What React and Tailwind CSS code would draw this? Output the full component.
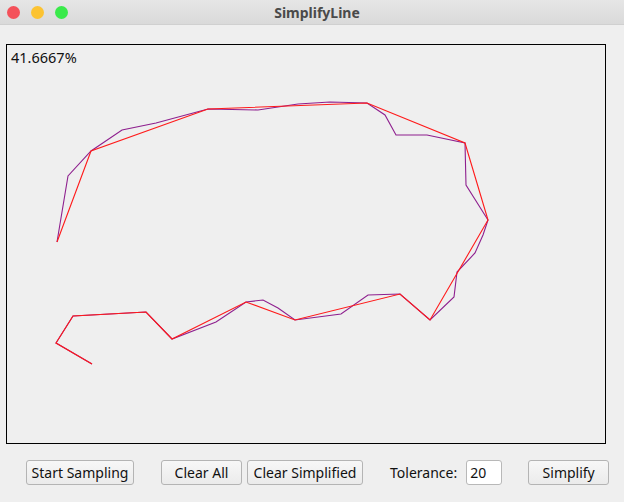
import React from "react";

const original = [
  [57, 242], [68, 176], [91, 151], [122, 130], [156, 123], [208, 109],
  [258, 110], [298, 104], [330, 102], [367, 103], [385, 115], [396, 135],
  [427, 135], [465, 143], [466, 185], [488, 220], [483, 235], [475, 253],
  [457, 272], [454, 297], [430, 320], [400, 294], [368, 295], [341, 314],
  [295, 320], [278, 308], [263, 300], [246, 302], [216, 322], [172, 339],
  [146, 312], [73, 316], [56, 343], [92, 364],
];

const simplified = [
  [57, 242], [91, 151], [208, 109], [367, 103], [465, 143], [488, 220],
  [430, 320], [400, 294], [295, 320], [246, 302], [172, 339], [146, 312],
  [73, 316], [56, 343], [92, 364],
];

const toPoints = (pts) => pts.map(([x, y]) => `${x},${y}`).join(" ");

const Button = ({ children, className }) => (
  <button
    className={`h-[25px] rounded-[3px] border border-[#b4b4b4] bg-gradient-to-b from-[#f7f7f7] to-[#ebebeb] text-[14px] text-[#111] leading-none ${className}`}
  >
    {children}
  </button>
);

const App = () => {
  return (
    <div
      className="w-[624px] h-[502px] bg-[#efefef] flex flex-col"
      style={{ fontFamily: '"Noto Sans", "Open Sans", sans-serif' }}
    >
      {/* title bar */}
      <div className="h-[25px] bg-gradient-to-b from-[#e6e6e6] to-[#dadada] border-b border-[#d0d0d0] flex items-center relative">
        <div className="flex items-center gap-[11px] pl-[7px]">
          <span className="w-[13px] h-[13px] rounded-full bg-[#f4515a]" />
          <span className="w-[13px] h-[13px] rounded-full bg-[#fcc332]" />
          <span className="w-[13px] h-[13px] rounded-full bg-[#3aea4b]" />
        </div>
        <div className="absolute inset-0 flex items-center justify-center pl-[10px] text-[14px] font-bold text-[#4a4a4a]">
          SimplifyLine
        </div>
      </div>

      {/* canvas */}
      <div className="ml-[6px] mt-[19px] w-[600px] h-[400px] border border-black relative">
        <div className="pl-[4px] pt-[3px] text-[14.5px] text-[#111] leading-[18px]">
          41.6667%
        </div>
        <svg
          className="absolute left-0 top-0"
          width="598"
          height="398"
          viewBox="7 45 598 398"
        >
          <polyline
            points={toPoints(original)}
            fill="none"
            stroke="#8e1f8e"
            strokeWidth="1.1"
          />
          <polyline
            points={toPoints(simplified)}
            fill="none"
            stroke="#ff1a1a"
            strokeWidth="1.1"
          />
        </svg>
      </div>

      {/* controls */}
      <div className="mt-[16px] flex items-center h-[25px]">
        <Button className="ml-[26px] w-[108px]">Start Sampling</Button>
        <Button className="ml-[27px] w-[81px]">Clear All</Button>
        <Button className="ml-[5px] w-[116px]">Clear Simplified</Button>
        <span className="ml-[27px] text-[14px] text-[#111]">Tolerance:</span>
        <div className="ml-[9px] w-[36px] h-[25px] bg-white border border-[#b8b8b8] rounded-[3px] text-[14px] text-[#111] pl-[3px] flex items-center">
          20
        </div>
        <Button className="ml-[26px] w-[81px]">Simplify</Button>
      </div>
    </div>
  );
};

export default App;
